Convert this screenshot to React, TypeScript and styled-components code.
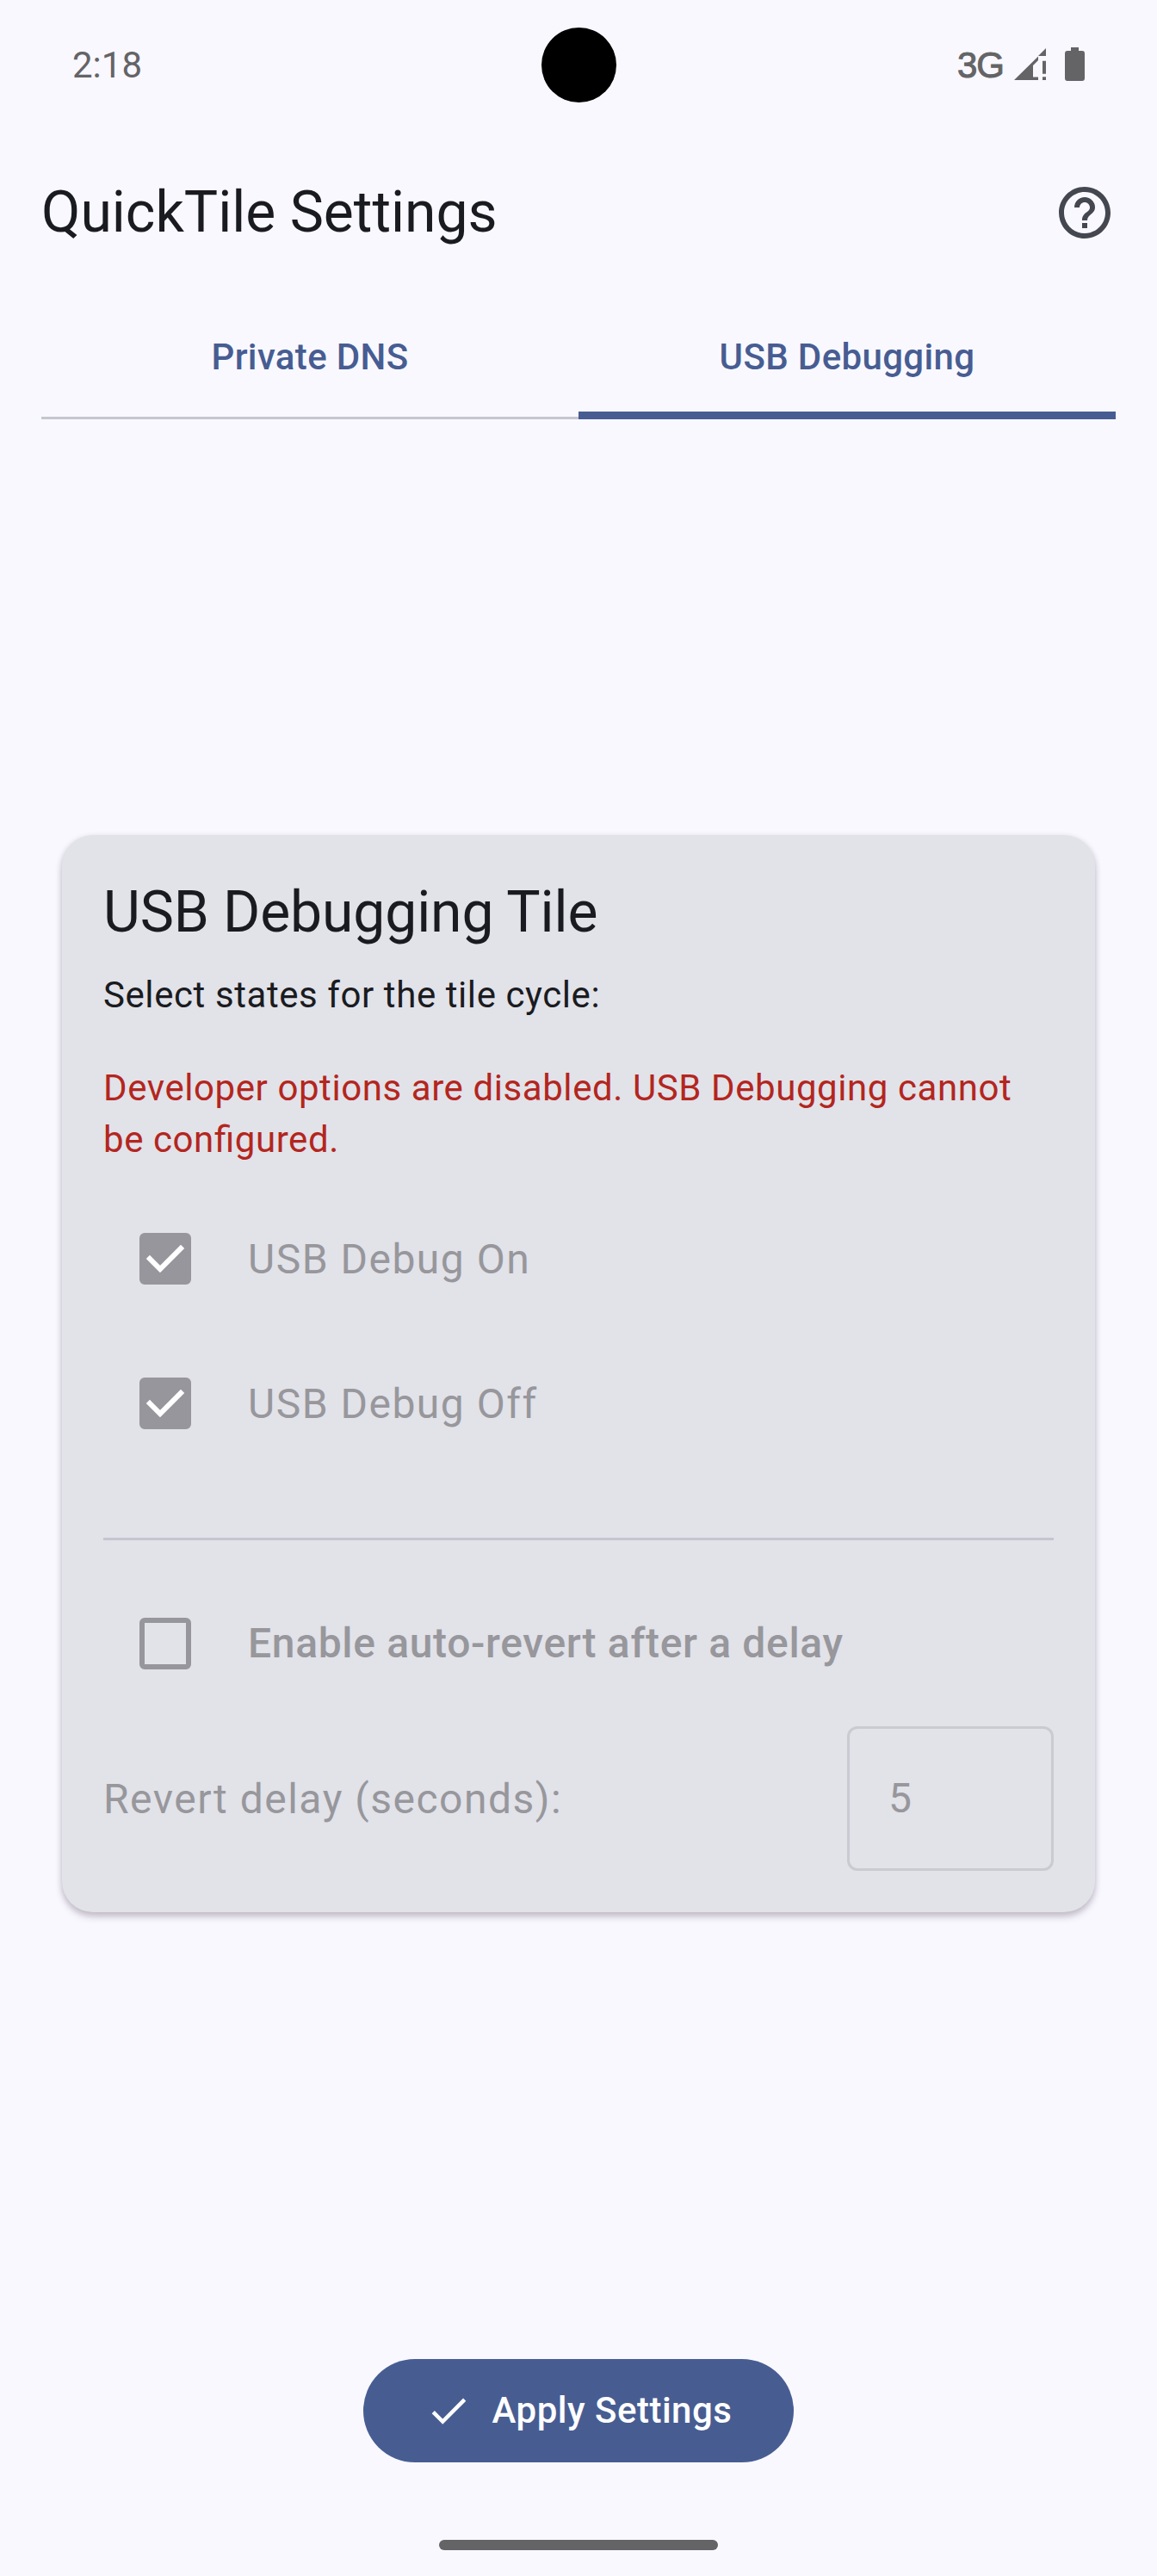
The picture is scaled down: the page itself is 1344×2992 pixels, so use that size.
import React from "react";
import styled, { createGlobalStyle } from "styled-components";

const Global = createGlobalStyle`
  *, *::before, *::after { box-sizing: border-box; }
  html, body { margin: 0; background: #f9f8ff; }
  body { font-family: Roboto, "Liberation Sans", sans-serif; font-weight: 400; }
`;

const Screen = styled.div`
  width: 1344px;
  height: 2992px;
  display: flex;
  flex-direction: column;
  background: #f9f8ff;
  color: #1a1b20;
  overflow: hidden;
`;

const StatusBar = styled.div`
  height: 150px;
  flex: none;
  display: grid;
  grid-template-columns: 1fr 87px 1fr;
  align-items: center;
  padding: 0 84px;
  color: #646466;
`;

const Clock = styled.span`
  padding-top: 1px;
  font-size: 42px;
  line-height: 50px;
`;

const Camera = styled.div`
  width: 87px;
  height: 87px;
  border-radius: 50%;
  background: #000;
`;

const StatusIcons = styled.div`
  display: flex;
  justify-content: flex-end;
  align-items: center;
`;

const Network = styled.span`
  padding-top: 2px;
  font-family: "Liberation Sans", sans-serif;
  font-size: 42px;
  line-height: 50px;
  letter-spacing: -1px;
  -webkit-text-stroke: 1px currentColor;
`;

const StatusSvg = styled.svg`
  width: 87px;
  height: 50px;
  margin-left: 7px;
  fill: currentColor;
`;

const AppBar = styled.header`
  height: 193px;
  flex: none;
  display: flex;
  align-items: center;
  justify-content: space-between;
  padding: 0 48px;
`;

const Title = styled.h1`
  margin: 0;
  font-size: 66px;
  line-height: 84px;
  font-weight: 400;
`;

const HelpSvg = styled.svg`
  width: 72px;
  height: 72px;
  fill: #44474f;
`;

const Tabs = styled.nav`
  height: 144px;
  flex: none;
  display: grid;
  grid-template-columns: 1fr 1fr;
  margin: 0 48px;
  box-shadow: inset 0 -3px #c5c6d0;
`;

const Tab = styled.button<{ $active?: boolean }>`
  border: 0;
  padding: 0 0 1px;
  background: none;
  box-shadow: ${(p) => (p.$active ? "inset 0 -9px #475d92" : "none")};
  color: #475d92;
  font: 500 42px/60px Roboto, sans-serif;
  letter-spacing: 0.35px;
`;

const Main = styled.main`
  flex: 1;
  display: flex;
  flex-direction: column;
  justify-content: center;
  padding: 0 72px;
`;

const Card = styled.section`
  display: flex;
  flex-direction: column;
  padding: 48px;
  border-radius: 36px;
  background: #e2e2e9;
  box-shadow: 0 2px 7px rgba(50, 30, 50, 0.16), 0 6px 9px rgba(50, 30, 50, 0.18);
`;

const CardTitle = styled.h2`
  margin: 0 0 24px;
  font-size: 66px;
  line-height: 84px;
  font-weight: 400;
  letter-spacing: -0.12px;
`;

const Body = styled.p<{ $error?: boolean }>`
  margin: 0 0 ${(p) => (p.$error ? 24 : 48)}px;
  font-size: 42px;
  line-height: 60px;
  letter-spacing: 0.58px;
  font-feature-settings: "liga" 1;
  color: ${(p) => (p.$error ? "#b3261e" : "inherit")};
`;

const CheckRow = styled.div<{ $strong?: boolean }>`
  height: 168px;
  display: flex;
  align-items: center;
  padding-left: 42px;
  gap: 66px;
  color: #97979c;
  font-size: 48px;
  line-height: 72px;
  font-weight: ${(p) => (p.$strong ? 500 : 400)};
  letter-spacing: ${(p) => (p.$strong ? 0.66 : 1.5)}px;
`;

const RowLabel = styled.span`
  padding-top: 1px;
`;

const Box = styled.span<{ $checked?: boolean }>`
  width: 60px;
  height: 60px;
  display: flex;
  border: 6px solid #97969c;
  border-radius: 6px;
  background: ${(p) => (p.$checked ? "#97969c" : "transparent")};
`;

const BoxMark = styled.svg`
  width: 48px;
  height: 48px;
  fill: none;
  stroke: #fff;
  stroke-width: 6;
  stroke-linecap: square;
`;

const Divider = styled.hr`
  width: 100%;
  height: 3px;
  margin: 72px 0 36px;
  border: 0;
  background: #c5c6d0;
`;

const DelayRow = styled.div`
  display: flex;
  align-items: center;
  justify-content: space-between;
  margin-top: 12px;
  color: #97979c;
  font-size: 48px;
  line-height: 72px;
  letter-spacing: 1.5px;
`;

const Field = styled.div`
  width: 240px;
  height: 168px;
  display: flex;
  align-items: center;
  padding-left: 45px;
  border: 3px solid #cacbd0;
  border-radius: 12px;
`;

const Footer = styled.footer`
  flex: none;
  height: 288px;
  display: flex;
  flex-direction: column;
  align-items: center;
  padding: 36px 0 30px;
  justify-content: space-between;
`;

const Apply = styled.button`
  height: 120px;
  display: flex;
  align-items: center;
  gap: 24px;
  padding: 0 72px;
  border: 0;
  border-radius: 60px;
  background: #475d92;
  color: #fff;
  font: 500 42px/60px Roboto, sans-serif;
  letter-spacing: 0.5px;
`;

const ApplySvg = styled.svg`
  width: 54px;
  height: 54px;
  fill: currentColor;
`;

const HomeBar = styled.div`
  width: 324px;
  height: 12px;
  border-radius: 6px;
  background: #646466;
`;

function Checkbox({ checked }: { checked?: boolean }) {
  return (
    <Box $checked={checked} role="checkbox" aria-checked={!!checked}>
      {checked && (
        <BoxMark viewBox="0 0 48 48">
          <path d="M6 24 18 36 42 12" />
        </BoxMark>
      )}
    </Box>
  );
}

export default function App() {
  return (
    <Screen>
      <Global />
      <StatusBar>
        <Clock>2:18</Clock>
        <Camera />
        <StatusIcons>
          <Network>3G</Network>
          <StatusSvg viewBox="0 0 87 50">
            <path d="M5 43 33 15.5V20L27 26V39.5H33V43Z" />
            <path d="M33 15 42 6V15Z" />
            <path d="M38 20.7H42V35.7H38ZM38 39.3H42V43H38Z" />
            <path d="M71 5H80V9H84Q87 9 87 12V41Q87 44 84 44H67Q64 44 64 41V12Q64 9 67 9H71Z" />
          </StatusSvg>
        </StatusIcons>
      </StatusBar>
      <AppBar>
        <Title>QuickTile Settings</Title>
        <HelpSvg viewBox="0 0 24 24">
          <path d="M11 18h2v-2h-2v2zm1-16C6.48 2 2 6.48 2 12s4.48 10 10 10 10-4.48 10-10S17.52 2 12 2zm0 18c-4.41 0-8-3.59-8-8s3.59-8 8-8 8 3.59 8 8-3.59 8-8 8zm0-14c-2.21 0-4 1.79-4 4h2c0-1.1.9-2 2-2s2 .9 2 2c0 2-3 1.75-3 5h2c0-2.25 3-2.5 3-5 0-2.21-1.79-4-4-4z" />
        </HelpSvg>
      </AppBar>
      <Tabs>
        <Tab>Private DNS</Tab>
        <Tab $active>USB Debugging</Tab>
      </Tabs>
      <Main>
        <Card>
          <CardTitle>USB Debugging Tile</CardTitle>
          <Body>Select states for the tile cycle:</Body>
          <Body $error>
            Developer options are disabled. USB Debugging cannot be configured.
          </Body>
          <CheckRow>
            <Checkbox checked />
            <RowLabel>USB Debug On</RowLabel>
          </CheckRow>
          <CheckRow>
            <Checkbox checked />
            <RowLabel>USB Debug Off</RowLabel>
          </CheckRow>
          <Divider />
          <CheckRow $strong>
            <Checkbox />
            Enable auto-revert after a delay
          </CheckRow>
          <DelayRow>
            <RowLabel>Revert delay (seconds):</RowLabel>
            <Field>5</Field>
          </DelayRow>
        </Card>
      </Main>
      <Footer>
        <Apply>
          <ApplySvg viewBox="0 0 24 24">
            <path d="M9 16.17 4.83 12l-1.42 1.41L9 19 21 7l-1.41-1.41z" />
          </ApplySvg>
          Apply Settings
        </Apply>
        <HomeBar />
      </Footer>
    </Screen>
  );
}
